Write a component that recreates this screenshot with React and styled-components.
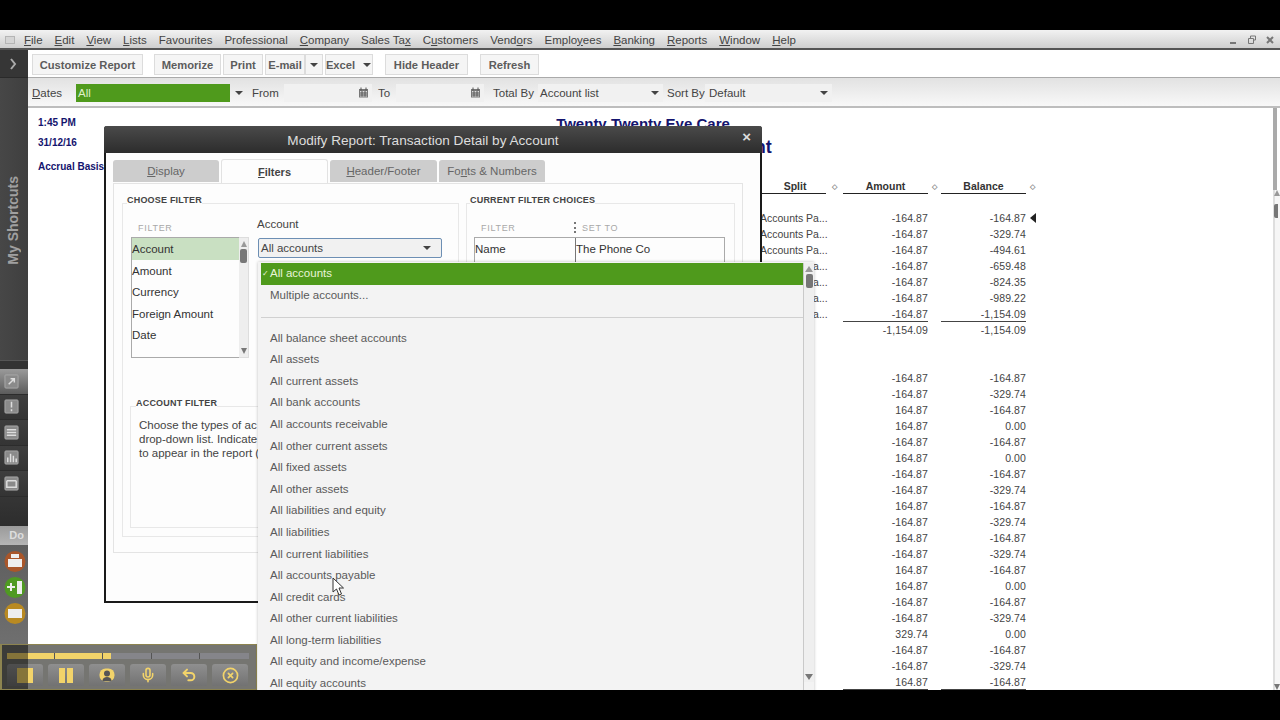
import styled, { createGlobalStyle } from "styled-components";
import { Mic, Undo2, CircleX } from "lucide-react";

const Navy = "#14146e";
const Green = "#4f9a1c";
const Yellow = "#f2d36a";

const GlobalStyle = createGlobalStyle`
  html, body {
    margin: 0;
    height: 100%;
    background: #000;
    overflow: hidden;
  }
  * { box-sizing: border-box; }
  body {
    font-family: "Liberation Sans", Arial, sans-serif;
    font-size: 11.5px;
  }
`;

const Screen = styled.div`
  width: 1280px;
  height: 720px;
  padding: 30px 0;
  background: #000;
`;

const Frame = styled.div`
  position: relative;
  height: 660px;
  display: flex;
  flex-direction: column;
  overflow: hidden;
  background: #fff;
`;

/* menu */
const MenuBar = styled.div`
  height: 20px;
  flex-shrink: 0;
  display: flex;
  align-items: center;
  padding: 1px 5px 0 5px;
  background: linear-gradient(#f2f2f2, #cfcfcf);
  border-bottom: 2px solid #555;
  color: #444;
`;

const AppMark = styled.div`
  width: 10px;
  height: 8px;
  margin-right: 9px;
  border: 1px solid #b5b5b5;
  background: #d5d5d5;
`;

const MenuItems = styled.div`
  display: flex;
  gap: 12px;
  white-space: nowrap;
`;

const WindowControls = styled.div`
  margin-left: auto;
  display: flex;
  gap: 8px;
  color: #777;
`;

/* left rail */
const Main = styled.div`
  flex: 1;
  min-height: 0;
  display: flex;
`;

const Sidebar = styled.div`
  width: 28px;
  flex-shrink: 0;
  display: flex;
  flex-direction: column;
  background: #3a3a3a;
`;

const RailTop = styled.div`
  height: 28px;
  display: flex;
  align-items: center;
  justify-content: center;
  padding-right: 2px;
  background: #363636;
  color: #aaa;
  border-bottom: 1px solid #2a2a2a;
`;

const ShortcutsArea = styled.div`
  height: 282px;
  padding: 98px 0 0 5px;
  background: linear-gradient(90deg, #474747, #3f3f3f);
`;

const ShortcutsLabel = styled.div`
  writing-mode: vertical-rl;
  transform: rotate(180deg);
  color: #a0a0a0;
  font-size: 14px;
  font-weight: 700;
  white-space: nowrap;
`;

const Handle = styled.div`
  height: 9px;
  background: #333;
  border-top: 1px solid #555;
`;

const RailRow = styled.div`
  height: 25.5px;
  display: flex;
  align-items: center;
  padding-left: 4px;
  background: ${(p) => (p.$active ? "linear-gradient(#9a9a9a, #5c5c5c)" : "linear-gradient(#3e3e3e, #343434)")};
  border-bottom: 1px solid #2c2c2c;
`;

const RailGap = styled.div`
  height: 29px;
  background: linear-gradient(#353535, #2d2d2d);
`;

const DoHeader = styled.div`
  height: 19px;
  padding-right: 4px;
  text-align: right;
  line-height: 18px;
  font-weight: 700;
  font-size: 11px;
  color: #ddd;
  background: linear-gradient(#9a9a9a, #b5b5b5);
`;

const DoBody = styled.div`
  flex: 1;
  display: flex;
  flex-direction: column;
  align-items: center;
  gap: 3px;
  padding: 5px 0 0 2px;
  background: linear-gradient(#5e5e5e, #777);
`;

/* content */
const Content = styled.div`
  flex: 1;
  min-width: 0;
  display: flex;
  flex-direction: column;
`;

const Toolbar = styled.div`
  height: 28px;
  flex-shrink: 0;
  display: flex;
  align-items: flex-start;
  padding: 4px 0 0 4px;
  background: #fff;
  border-bottom: 1px solid #aaa;
`;

const ToolButton = styled.div`
  width: ${(p) => p.$w}px;
  height: 21px;
  margin-right: ${(p) => p.$after ?? 2}px;
  display: flex;
  align-items: center;
  justify-content: center;
  gap: 8px;
  background: #f5f5f5;
  border: 1px solid #dcdcdc;
  color: #5c5c5c;
  font-weight: 700;
  font-size: 11.2px;
  white-space: nowrap;
`;

const FilterBar = styled.div`
  height: 30px;
  flex-shrink: 0;
  display: flex;
  align-items: center;
  padding: 1px 0 0 4px;
  background: linear-gradient(#e2e2e2, #f8f8f8);
  border-bottom: 2px solid #bdbdbd;
  color: #444;
`;

const FilterLabel = styled.span`
  width: ${(p) => p.$w}px;
  white-space: nowrap;
`;

const ArrowSlot = styled.span`
  width: 22px;
  display: flex;
  padding-left: 5px;
`;

const Field = styled.div`
  width: ${(p) => p.$w}px;
  height: 18px;
  margin-right: ${(p) => p.$after || 0}px;
  display: flex;
  align-items: center;
  justify-content: space-between;
  padding: 0 3px 0 ${(p) => p.$pad ?? 2}px;
  background: ${(p) => p.$bg || "#f1f1f1"};
  color: ${(p) => p.$color || "#444"};
`;

const Arrow = styled.span`
  width: 0;
  height: 0;
  margin-right: 1px;
  border-left: 4px solid transparent;
  border-right: 4px solid transparent;
  border-top: 4px solid #444;
`;

/* report */
const ReportArea = styled.div`
  flex: 1;
  min-height: 0;
  display: flex;
`;

const ReportBody = styled.div`
  flex: 1;
  min-width: 0;
  overflow: hidden;
`;

const ReportHead = styled.div`
  height: 72px;
  display: flex;
`;

const Meta = styled.div`
  width: 440px;
  padding: 9px 0 0 10px;
  color: ${Navy};
  font-size: 10px;
  font-weight: 700;
`;

const MetaLine = styled.div`
  height: ${(p) => p.$h}px;
  line-height: 12px;
`;

const Titles = styled.div`
  width: 300px;
  margin-left: 25px;
  padding-top: 7px;
  color: ${Navy};
  font-weight: 700;
  text-align: center;
  white-space: nowrap;
`;

const Company = styled.div`
  font-size: 15px;
  line-height: 17px;
`;

const ReportName = styled.div`
  font-size: 18px;
  line-height: 22px;
  margin-top: 4px;
`;

const ReportTable = styled.div`
  margin-left: 732px;
  font-size: 10.5px;
  color: #444;
`;

const HeadRow = styled.div`
  display: grid;
  grid-template-columns: 66px 17px 85px 13px 85px 12px;
  height: 14px;
  margin-bottom: 16px;
  font-weight: 700;
  color: #333;
  text-align: center;
  line-height: 13px;
`;

const HeadCell = styled.div`
  padding-left: ${(p) => p.$pad || 0}px;
  border-bottom: 1px solid #222;
`;

const Diamond = styled.span`
  color: #888;
  font-size: 7px;
  line-height: 13px;
`;

const Row = styled.div`
  display: grid;
  grid-template-columns: 68px 15px 85px 13px 85px 12px;
  height: 16px;
  line-height: 16px;
  margin-bottom: ${(p) => (p.$last ? 32 : 0)}px;
`;

const Num = styled.div`
  grid-column: ${(p) => p.$col};
  text-align: right;
  white-space: nowrap;
  letter-spacing: 0.1px;
  height: 16px;
  border-bottom: ${(p) => (p.$line ? "1px solid #444" : "none")};
`;

const SplitCell = styled.div`
  grid-column: 1;
  white-space: nowrap;
  overflow: hidden;
`;

const Marker = styled.span`
  width: 0;
  height: 0;
  margin: 3px 0 0 4px;
  border-top: 5px solid transparent;
  border-bottom: 5px solid transparent;
  border-right: 6px solid #222;
`;

const RightRail = styled.div`
  width: 7px;
  flex-shrink: 0;
  display: flex;
  flex-direction: column;
`;

const RailThumb = styled.div`
  height: 82px;
  width: 4px;
  background: #aaa;
`;

const RailTrack = styled.div`
  flex: 1;
  display: flex;
  flex-direction: column;
  align-items: flex-end;
  justify-content: space-between;
  border-left: 2px solid #dedede;
  background: #f6f6f6;
`;

const RailKnob = styled.div`
  width: 4px;
  height: 14px;
  margin-top: 8px;
  border-radius: 2px 0 0 2px;
  background: #777;
`;

const RailArrow = styled.div`
  width: 0;
  height: 0;
  border-left: ${(p) => p.$size || 3}px solid transparent;
  border-right: ${(p) => p.$size || 3}px solid transparent;
  border-top: ${(p) => (p.$up ? "none" : "6px solid #777")};
  border-bottom: ${(p) => (p.$up ? "6px solid #999" : "none")};
`;

/* modal */
const Modal = styled.div`
  position: absolute;
  left: 104px;
  top: 96px;
  width: 658px;
  height: 477px;
  display: flex;
  flex-direction: column;
  background: #fdfdfd;
  border: 2px solid #1a1a1a;
  border-top: none;
  border-radius: 3px 3px 0 0;
`;

const ModalTitle = styled.div`
  height: 27px;
  margin: 0 -2px;
  flex-shrink: 0;
  display: flex;
  align-items: center;
  justify-content: center;
  position: relative;
  padding: 2px 20px 0 0;
  border-radius: 3px 3px 0 0;
  background: linear-gradient(#4a4a4a, #2c2c2c);
  color: #ddd;
  font-size: 13.6px;
`;

const ModalClose = styled.span`
  position: absolute;
  right: 11px;
  top: 4px;
  color: #ddd;
  font-size: 15px;
  font-weight: 700;
  line-height: 14px;
`;

const Tabs = styled.div`
  height: 23px;
  margin: 7px 0 0 7px;
  flex-shrink: 0;
  display: flex;
  gap: 2px;
`;

const Tab = styled.div`
  width: ${(p) => p.$w}px;
  height: ${(p) => (p.$active ? 24 : 22)}px;
  margin-top: ${(p) => (p.$active ? -1 : 0)}px;
  position: relative;
  z-index: ${(p) => (p.$active ? 1 : 0)};
  display: flex;
  align-items: center;
  justify-content: center;
  border-radius: 3px 3px 0 0;
  background: ${(p) => (p.$active ? "#fdfdfd" : "#cdcdcd")};
  border: ${(p) => (p.$active ? "1px solid #e2e2e2" : "none")};
  border-bottom: none;
  color: ${(p) => (p.$active ? "#444" : "#666")};
  font-weight: ${(p) => (p.$active ? 700 : 400)};
  font-size: ${(p) => (p.$active ? 11 : 11.5)}px;
`;

const TabPanel = styled.div`
  width: 630px;
  height: 370px;
  margin-left: 7px;
  flex-shrink: 0;
  display: flex;
  gap: 7px;
  padding: 11px 8px 0 8px;
  border: 1px solid #e4e4e4;
`;

const Group = styled.fieldset`
  width: ${(p) => p.$w}px;
  height: 342px;
  margin: 0;
  padding: 0;
  min-width: 0;
  border: 1px solid #e8e8e8;
  flex-shrink: 0;
`;

const GroupTitle = styled.legend`
  margin-left: ${(p) => p.$left ?? 4}px;
  padding: 0 0 6px;
  font-size: 9px;
  font-weight: 700;
  line-height: 10px;
  letter-spacing: 0.2px;
  color: #444;
`;

const FilterRow = styled.div`
  display: flex;
  padding: 6px 0 0 8px;
  height: 156px;
`;

const FilterColumn = styled.div`
  width: 118px;
  flex-shrink: 0;
`;

const ColumnLabel = styled.div`
  width: ${(p) => (p.$w ? p.$w + "px" : "auto")};
  height: 20px;
  display: flex;
  align-items: flex-start;
  padding: 6px 0 0 ${(p) => p.$left ?? 7}px;
  font-size: 9px;
  line-height: 10px;
  letter-spacing: 0.7px;
  color: #a8a8a8;
`;

const ListWrap = styled.div`
  display: flex;
  height: 121px;
`;

const FilterList = styled.div`
  flex: 1;
  border: 1px solid #aaa;
  border-right: none;
`;

const FilterOption = styled.div`
  height: 21.6px;
  line-height: 23px;
  color: #333;
  background: ${(p) => (p.$active ? "#c9e0c2" : "transparent")};
`;

const MiniScroll = styled.div`
  width: 10px;
  display: flex;
  flex-direction: column;
  align-items: center;
  padding: 3px 0;
  background: #eee;
  border: 1px solid #ddd;
  border-left: none;
`;

const ScrollThumb = styled.div`
  width: 7px;
  height: 14px;
  margin: 2px 0 auto;
  border-radius: 2px;
  background: #777;
`;

const AccountColumn = styled.div`
  padding-left: 8px;
`;

const AccountLabel = styled.div`
  height: 21px;
  line-height: 14px;
  color: #444;
`;

const AccountSelect = styled.div`
  width: 184px;
  height: 20px;
  margin: 0 0 0 1px;
  display: flex;
  align-items: center;
  justify-content: space-between;
  padding: 0 9px 0 2px;
  border: 1px solid #6d8fb4;
  border-radius: 2px;
  background: #f1f1f1;
  color: #444;
`;

const NoteBox = styled.fieldset`
  width: 320px;
  height: 130px;
  margin: 31px 0 0 7px;
  padding: 4px 0 0 8px;
  min-width: 0;
  border: 1px solid #e8e8e8;
`;

const NoteLine = styled.div`
  height: 14px;
  line-height: 14px;
  color: #444;
  white-space: nowrap;
`;

const ChoiceHead = styled.div`
  display: flex;
  padding: 6px 0 0 7px;
`;

const ChoiceTable = styled.div`
  width: 251px;
  height: 40px;
  margin-left: 7px;
  display: flex;
  border: 1px solid #aaa;
  color: #333;
`;

const ChoiceCell = styled.div`
  width: ${(p) => p.$w}px;
  padding-top: 5px;
  border-right: ${(p) => (p.$line ? "1px solid #777" : "none")};
`;

const DottedRule = styled.span`
  height: 11px;
  margin: -1px 6px 0 -3px;
  border-left: 2px dotted #777;
`;

/* dropdown */
const Dropdown = styled.div`
  position: absolute;
  left: 258px;
  top: 232px;
  width: 556px;
  height: 440px;
  display: flex;
  background: #f3f3f3;
  box-shadow: 0 0 3px rgba(0, 0, 0, 0.25);
  padding: 1px 0 0 3px;
`;

const DropList = styled.div`
  flex: 1;
  min-width: 0;
  border-right: 1px solid #c9c9c9;
`;

const DropItem = styled.div`
  height: 21.6px;
  line-height: 21px;
  padding-left: 9px;
  white-space: nowrap;
  position: relative;
  background: ${(p) => (p.$active ? Green : "transparent")};
  color: ${(p) => (p.$active ? "#e8f4d8" : "#5a5a5a")};
`;

const Tick = styled.span`
  position: absolute;
  left: 1px;
  top: 0;
  font-size: 8px;
`;

const DropDivider = styled.div`
  height: 21.4px;
  position: relative;
  &::after {
    content: "";
    position: absolute;
    left: 0;
    right: 0;
    top: 11px;
    border-top: 1px solid #d0d0d0;
  }
`;

const DropScroll = styled.div`
  width: 10px;
  height: 419px;
  flex-shrink: 0;
  display: flex;
  flex-direction: column;
  align-items: center;
  padding: 3px 0 2px;
  background: #efefef;
`;

const Pointer = styled.svg`
  position: absolute;
  left: 332px;
  top: 547px;
`;

/* recorder */
const Recorder = styled.div`
  position: absolute;
  left: 0;
  top: 614px;
  width: 257px;
  height: 46px;
  padding: 8px 7px 0 5px;
  background: rgba(108, 108, 104, 0.94);
  border: 1px solid #8d8450;
  border-left-width: 2px;
  &::before {
    content: "";
    position: absolute;
    left: 0;
    top: 0;
    bottom: 0;
    width: 26px;
    background: rgba(0, 0, 0, 0.45);
    pointer-events: none;
  }
`;

const Progress = styled.div`
  display: grid;
  grid-template-columns: repeat(5, 1fr);
  gap: 1px;
  height: 6px;
  background: linear-gradient(90deg, ${Yellow} 43%, #85858a 43%);
`;

const ProgressGap = styled.div`
  grid-column: ${(p) => p.$n};
  border-right: 1px solid #555;
`;

const RecButtons = styled.div`
  display: flex;
  gap: 5.6px;
  margin-top: 5px;
`;

const RecButton = styled.div`
  width: 35.5px;
  height: 22px;
  display: flex;
  align-items: center;
  justify-content: center;
  border-radius: 3px 3px 0 0;
  background: linear-gradient(#8f8f8f, #727272);
  color: ${Yellow};
`;

const Shape = styled.span`
  width: ${(p) => p.$w}px;
  height: 15px;
  background: ${Yellow};
`;

const PauseBars = styled.span`
  display: flex;
  gap: 2px;
`;

const menu = ["&File", "&Edit", "&View", "&Lists", "Favourites", "Professional", "&Company", "Sales Ta&x", "C&ustomers", "Vend&ors", "Emplo&yees", "&Banking", "&Reports", "&Window", "&Help"];

const firstGroup = [
  ["-164.87", "-164.87"],
  ["-164.87", "-329.74"],
  ["-164.87", "-494.61"],
  ["-164.87", "-659.48"],
  ["-164.87", "-824.35"],
  ["-164.87", "-989.22"],
  ["-164.87", "-1,154.09"],
  ["-1,154.09", "-1,154.09"],
];

const secondGroup = [
  ["-164.87", "-164.87"],
  ["-164.87", "-329.74"],
  ["164.87", "-164.87"],
  ["164.87", "0.00"],
  ["-164.87", "-164.87"],
  ["164.87", "0.00"],
  ["-164.87", "-164.87"],
  ["-164.87", "-329.74"],
  ["164.87", "-164.87"],
  ["-164.87", "-329.74"],
  ["164.87", "-164.87"],
  ["-164.87", "-329.74"],
  ["164.87", "-164.87"],
  ["164.87", "0.00"],
  ["-164.87", "-164.87"],
  ["-164.87", "-329.74"],
  ["329.74", "0.00"],
  ["-164.87", "-164.87"],
  ["-164.87", "-329.74"],
  ["164.87", "-164.87"],
];

const accountOptions = [
  "All balance sheet accounts", "All assets", "All current assets", "All bank accounts",
  "All accounts receivable", "All other current assets", "All fixed assets", "All other assets",
  "All liabilities and equity", "All liabilities", "All current liabilities", "All accounts payable",
  "All credit cards", "All other current liabilities", "All long-term liabilities",
  "All equity and income/expense", "All equity accounts",
];

// "&" marks the mnemonic letter, same as the app's own menu labels
const Mnemonic = ({ text }) => {
  const at = text.indexOf("&");
  if (at < 0) return <span>{text}</span>;
  return (
    <span>
      {text.slice(0, at)}
      <u>{text[at + 1]}</u>
      {text.slice(at + 2)}
    </span>
  );
};

const Calendar = () => (
  <svg width="11" height="11" viewBox="0 0 11 11">
    <rect x="1" y="2" width="9" height="8.5" fill="#777" />
    <rect x="2" y="4" width="7" height="5.5" fill="#ddd" />
    <path d="M3 0.5v3M8 0.5v3M2 6h7M2 8h7M4 4v5.5M7 4v5.5" stroke="#555" />
  </svg>
);

const RailIcon = ({ d }) => (
  <svg width="15" height="15" viewBox="0 0 16 16">
    <rect x="1" y="1" width="14" height="14" rx="1" fill="#8a8a8a" stroke="#aaa" />
    <path d={d} stroke="#ddd" strokeWidth="1.6" fill="none" />
  </svg>
);

const DoIcon = ({ fill, d }) => (
  <svg width="22" height="23" viewBox="0 0 22 23">
    <circle cx="11" cy="11.5" r="10.5" fill={fill} />
    <path d={d} fill="#eee" />
  </svg>
);

const App = () => {
  return (
    <Screen>
      <GlobalStyle />
      <Frame>
        <MenuBar>
          <AppMark />
          <MenuItems>
            {menu.map((label) => (
              <Mnemonic key={label} text={label} />
            ))}
          </MenuItems>
          <WindowControls>
            <svg width="10" height="10" viewBox="0 0 10 10"><path d="M1 8h6" stroke="#777" strokeWidth="2" /></svg>
            <svg width="10" height="10" viewBox="0 0 10 10"><path d="M3.5 3V1h5v4H6.5M1.5 3.5h5v5h-5z" stroke="#777" fill="none" /></svg>
            <svg width="10" height="10" viewBox="0 0 10 10"><path d="M2 2l6 6M8 2l-6 6" stroke="#777" strokeWidth="2" /></svg>
          </WindowControls>
        </MenuBar>

        <Main>
          <Sidebar>
            <RailTop>
              <svg width="8" height="12" viewBox="0 0 8 12"><path d="M2 1l4 5-4 5" stroke="#aaa" strokeWidth="2" fill="none" /></svg>
            </RailTop>
            <ShortcutsArea>
              <ShortcutsLabel>My Shortcuts</ShortcutsLabel>
            </ShortcutsArea>
            <Handle />
            <RailRow $active><RailIcon d="M5 11l6-6M7 5h4v4" /></RailRow>
            <RailRow><RailIcon d="M8 3v6M8 11v2" /></RailRow>
            <RailRow><RailIcon d="M3 5h10M3 8h10M3 11h10" /></RailRow>
            <RailRow><RailIcon d="M4 13V8M7 13V4M10 13V6M13 13V9" /></RailRow>
            <RailRow><RailIcon d="M3 5h10M3 5v7h10V5" /></RailRow>
            <RailGap />
            <DoHeader>Do</DoHeader>
            <DoBody>
              <DoIcon fill="#a9562a" d="M7 4h8v4H7zM4 9h14v8H4z" />
              <DoIcon fill="#4f9a22" d="M3 10h3V7h2v3h3v2H8v3H6v-3H3zM13 5h5v13h-5z" />
              <DoIcon fill="#b98a22" d="M4 7h14v9H4z" />
            </DoBody>
          </Sidebar>

          <Content>
            <Toolbar>
              <ToolButton $w={111} $after={11}>Customize Report</ToolButton>
              <ToolButton $w={67}>Memorize</ToolButton>
              <ToolButton $w={40}>Print</ToolButton>
              <ToolButton $w={40} $after={0}>E-mail</ToolButton>
              <ToolButton $w={18}><Arrow /></ToolButton>
              <ToolButton $w={48} $after={12}>Excel <Arrow /></ToolButton>
              <ToolButton $w={83} $after={12}>Hide Header</ToolButton>
              <ToolButton $w={59}>Refresh</ToolButton>
            </Toolbar>
            <FilterBar>
              <FilterLabel $w={44}><u>D</u>ates</FilterLabel>
              <Field $w={154} $bg={Green} $color="#dff0c8">All</Field>
              <ArrowSlot><Arrow /></ArrowSlot>
              <FilterLabel $w={32}>From</FilterLabel>
              <Field $w={88} $after={6}><span /><Calendar /></Field>
              <FilterLabel $w={18}>To</FilterLabel>
              <Field $w={88} $after={9}><span /><Calendar /></Field>
              <FilterLabel $w={45}>Total By</FilterLabel>
              <Field $w={125} $after={4}>Account list <Arrow /></Field>
              <FilterLabel $w={38}>Sort By</FilterLabel>
              <Field $w={127} $pad={4}>Default <Arrow /></Field>
            </FilterBar>

            <ReportArea>
              <ReportBody>
                <ReportHead>
                  <Meta>
                    <MetaLine $h={20}>1:45 PM</MetaLine>
                    <MetaLine $h={24}>31/12/16</MetaLine>
                    <MetaLine $h={12}>Accrual Basis</MetaLine>
                  </Meta>
                  <Titles>
                    <Company>Twenty Twenty Eye Care</Company>
                    <ReportName>Transaction Detail by Account</ReportName>
                  </Titles>
                </ReportHead>
                <ReportTable>
                  <HeadRow>
                    <HeadCell $pad={4}>Split</HeadCell>
                    <Diamond>◇</Diamond>
                    <HeadCell>Amount</HeadCell>
                    <Diamond>◇</Diamond>
                    <HeadCell>Balance</HeadCell>
                    <Diamond>◇</Diamond>
                  </HeadRow>
                  {firstGroup.map(([amount, balance], i) => (
                    <Row key={"a" + i} $last={i === firstGroup.length - 1}>
                      {i < 7 && <SplitCell>Accounts Pa...</SplitCell>}
                      <Num $col={3} $line={i === 6}>{amount}</Num>
                      <Num $col={5} $line={i === 6}>{balance}</Num>
                      {i === 0 && <Marker />}
                    </Row>
                  ))}
                  {secondGroup.map(([amount, balance], i) => (
                    <Row key={"b" + i}>
                      <Num $col={3} $line={i === secondGroup.length - 1}>{amount}</Num>
                      <Num $col={5} $line={i === secondGroup.length - 1}>{balance}</Num>
                    </Row>
                  ))}
                </ReportTable>
              </ReportBody>
              <RightRail>
                <RailThumb />
                <RailTrack>
                  <div>
                    <RailArrow $up />
                    <RailKnob />
                  </div>
                  <RailArrow />
                </RailTrack>
              </RightRail>
            </ReportArea>
          </Content>
        </Main>

        <Modal>
          <ModalTitle>
            Modify Report: Transaction Detail by Account
            <ModalClose>×</ModalClose>
          </ModalTitle>
          <Tabs>
            <Tab $w={106}><Mnemonic text="&Display" /></Tab>
            <Tab $w={107} $active><Mnemonic text="&Filters" /></Tab>
            <Tab $w={107}><Mnemonic text="&Header/Footer" /></Tab>
            <Tab $w={106}><Mnemonic text="Fo&nts & Numbers" /></Tab>
          </Tabs>
          <TabPanel>
            <Group $w={337}>
              <GroupTitle>CHOOSE FILTER</GroupTitle>
              <FilterRow>
                <FilterColumn>
                  <ColumnLabel>FILTER</ColumnLabel>
                  <ListWrap>
                    <FilterList>
                      <FilterOption $active>Account</FilterOption>
                      <FilterOption>Amount</FilterOption>
                      <FilterOption>Currency</FilterOption>
                      <FilterOption>Foreign Amount</FilterOption>
                      <FilterOption>Date</FilterOption>
                    </FilterList>
                    <MiniScroll>
                      <RailArrow $up />
                      <ScrollThumb />
                      <RailArrow />
                    </MiniScroll>
                  </ListWrap>
                </FilterColumn>
                <AccountColumn>
                  <AccountLabel>Account</AccountLabel>
                  <AccountSelect>All accounts <Arrow /></AccountSelect>
                </AccountColumn>
              </FilterRow>
              <NoteBox>
                <GroupTitle $left={-3}>ACCOUNT FILTER</GroupTitle>
                <NoteLine>Choose the types of ac</NoteLine>
                <NoteLine>drop-down list. Indicate</NoteLine>
                <NoteLine>to appear in the report (</NoteLine>
              </NoteBox>
            </Group>
            <Group $w={269}>
              <GroupTitle $left={3}>CURRENT FILTER CHOICES</GroupTitle>
              <ChoiceHead>
                <ColumnLabel $w={103}>FILTER</ColumnLabel>
                <ColumnLabel $left={0}>
                  <DottedRule />SET TO
                </ColumnLabel>
              </ChoiceHead>
              <ChoiceTable>
                <ChoiceCell $w={101} $line>Name</ChoiceCell>
                <ChoiceCell $w={148}>The Phone Co</ChoiceCell>
              </ChoiceTable>
            </Group>
          </TabPanel>
        </Modal>

        <Recorder>
          <Progress>
            <ProgressGap $n={1} />
            <ProgressGap $n={2} />
            <ProgressGap $n={3} />
            <ProgressGap $n={4} />
          </Progress>
          <RecButtons>
            <RecButton><Shape $w={16} /></RecButton>
            <RecButton>
              <PauseBars><Shape $w={6} /><Shape $w={6} /></PauseBars>
            </RecButton>
            <RecButton>
              <svg width="16" height="14" viewBox="0 0 16 14">
                <rect x="0.5" y="0.5" width="15" height="13" rx="6" fill={Yellow} />
                <circle cx="8" cy="5.5" r="3" fill="#555" />
                <path d="M3.5 13c0-3 2-4 4.5-4s4.5 1 4.5 4z" fill="#555" />
              </svg>
            </RecButton>
            <RecButton><Mic size={16} strokeWidth={2.4} /></RecButton>
            <RecButton><Undo2 size={16} strokeWidth={3} /></RecButton>
            <RecButton><CircleX size={17} strokeWidth={2.4} /></RecButton>
          </RecButtons>
        </Recorder>

        <Dropdown>
          <DropList>
            <DropItem $active><Tick>✓</Tick>All accounts</DropItem>
            <DropItem>Multiple accounts...</DropItem>
            <DropDivider />
            {accountOptions.map((label) => (
              <DropItem key={label}>{label}</DropItem>
            ))}
          </DropList>
          <DropScroll>
            <RailArrow $up $size={4} />
            <ScrollThumb />
            <RailArrow $size={4} />
          </DropScroll>
        </Dropdown>

        <Pointer width="13" height="19" viewBox="0 0 13 19">
          <path d="M1 1v14l3.5-3 2.5 6 2.5-1-2.5-6h4.5z" fill="#fff" stroke="#333" strokeWidth="1" />
        </Pointer>
      </Frame>
    </Screen>
  );
};

export default App;
